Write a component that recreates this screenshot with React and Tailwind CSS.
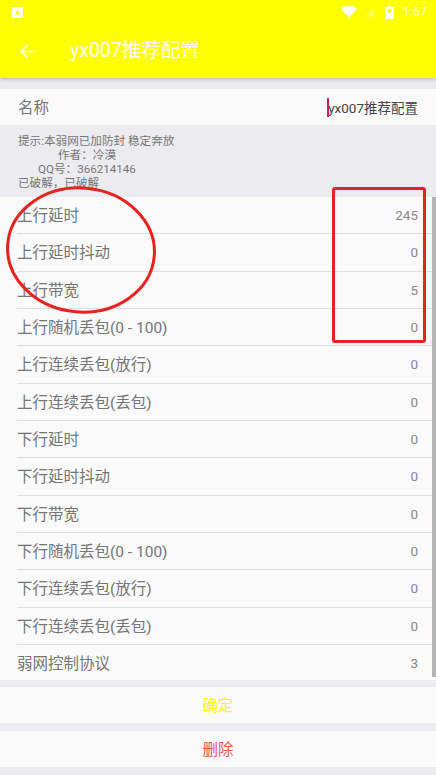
const rows = [
  ["上行延时", "245"],
  ["上行延时抖动", "0"],
  ["上行带宽", "5"],
  ["上行随机丢包(0 - 100)", "0"],
  ["上行连续丢包(放行)", "0"],
  ["上行连续丢包(丢包)", "0"],
  ["下行延时", "0"],
  ["下行延时抖动", "0"],
  ["下行带宽", "0"],
  ["下行随机丢包(0 - 100)", "0"],
  ["下行连续丢包(放行)", "0"],
  ["下行连续丢包(丢包)", "0"],
  ["弱网控制协议", "3"],
];

const font = { fontFamily: '"Roboto", "Noto Sans CJK SC", sans-serif' };

function StatusBar() {
  return (
    <div className="h-6 flex items-center justify-between pl-3 pr-[9px] text-white">
      <svg width="11" height="11" viewBox="0 0 11 11">
        <path fillRule="evenodd" d="M1 0h9a1 1 0 0 1 1 1v9a1 1 0 0 1-1 1H1a1 1 0 0 1-1-1V1a1 1 0 0 1 1-1zM5.500 2.500 3 8.500h1.400l.4-1.200h1.400l.4 1.200H8z" fill="#fff" />
      </svg>
      <div className="flex items-center">
        <svg width="16" height="12" viewBox="0 0 16 12" className="mr-2">
          <path d="M0 2.500C2 .8 5 0 8 0s6 .8 8 2.500L8 12z" fill="#fff" />
        </svg>
        <svg width="9" height="10" viewBox="0 0 10 11" className="mr-[11px] opacity-30">
          <path d="M10 0v11H0z" fill="#fff" />
        </svg>
        <svg width="9" height="13" viewBox="0 0 9 13" className="mr-2">
          <path fillRule="evenodd" d="M3 0h3v1h2a1 1 0 0 1 1 1v10a1 1 0 0 1-1 1H1a1 1 0 0 1-1-1V2a1 1 0 0 1 1-1h2zM2.500 3v3.500h4V3z" fill="#fff" />
        </svg>
        <span className="text-[12.500px] font-medium leading-none text-white/70">1:57</span>
      </div>
    </div>
  );
}

export default function App() {
  return (
    <div className="relative h-[775px] w-[436px] overflow-hidden bg-[#ebebf0] flex flex-col" style={font}>
      <header className="h-[78px] shrink-0 bg-[#ffff00] shadow-[0_1px_4px_rgba(0,0,0,0.25)] relative z-10">
        <StatusBar />
        <div className="h-[54px] flex items-center pl-5 text-white">
          <svg width="15" height="15" viewBox="0 0 16 16" fill="none" stroke="#fff" strokeWidth="1.800">
            <path d="M16 8H1.500M8 1.200 1.300 8 8 14.800" />
          </svg>
          <span className="ml-[35px] text-[19.500px] leading-none">yx007推荐配置</span>
        </div>
      </header>

      <div className="mt-[11px] h-9 shrink-0 bg-[#fafafa] flex items-center justify-between px-[18px]">
        <span className="pt-1 text-[15.500px] text-[#757575]">名称</span>
        <span className="relative pt-[2px] text-[13.500px] text-[#444]">
          <span className="absolute -left-px top-[2px] h-[19px] w-[2px] bg-[#d81b60]" />
          yx007推荐配置
        </span>
      </div>

      <div className="h-[72px] shrink-0 pl-[18px] pt-[9px] text-[11.600px] leading-[13.900px] text-[#777]">
        <div className="pt-[1px]">提示:本弱网已加防封 稳定奔放</div>
        <div className="pl-[40px]">作者：冷漠</div>
        <div className="pl-[20px]">QQ号：366214146</div>
        <div>已破解，已破解</div>
      </div>

      <div className="relative h-[483px] shrink-0 overflow-hidden bg-[#fafafa] flex flex-col">
        {rows.map(([label, value], i) => (
          <div key={label} className="h-[37.330px] shrink-0 pl-[17px]">
            <div className={`h-full flex items-center justify-between pr-[18px] ${i < rows.length - 1 ? "border-b border-[#dedede]" : ""}`}>
              <span className="pt-[3px] text-[15.500px] text-[#757575]">{label}</span>
              <span className="text-[13.500px] text-[#868686]">{value}</span>
            </div>
          </div>
        ))}
        <div className="absolute right-0 top-0 h-[480px] w-1 bg-[#b4b4b4]" />
      </div>

      <button className="mt-[7px] h-9 shrink-0 bg-[#fafafa] pt-1 text-[15.500px] text-[#ffff00]">确定</button>
      <button className="mt-2 h-9 shrink-0 bg-[#fafafa] pt-1 text-[15.500px] text-[#ef5350]">删除</button>

      <svg className="absolute left-0 top-[180px] z-20" width="170" height="145" viewBox="0 0 170 145" fill="none">
        <ellipse cx="81" cy="70" rx="73.500" ry="62" transform="rotate(5 81 70)" stroke="#e8221f" strokeWidth="3" />
      </svg>
      <div className="absolute left-[332px] top-[187px] h-[156px] w-[94px] rounded-[3px] border-[3px] border-[#e8221f] z-20" />
    </div>
  );
}
